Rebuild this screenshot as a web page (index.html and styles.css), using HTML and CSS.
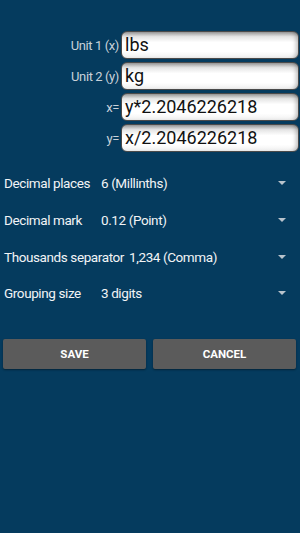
FILE: index.html
```html
<!DOCTYPE html>
<html lang="en">
<head>
    <meta charset="UTF-8">
    <meta name="viewport" content="width=device-width, initial-scale=1.0">
    <title>Edit unit</title>
    <link rel="stylesheet" href="styles.css">
</head>
<body>
    <section class="units">
        <div class="field">
            <label>Unit 1 (x)</label>
            <div class="box">lbs</div>
        </div>
        <div class="field">
            <label>Unit 2 (y)</label>
            <div class="box">kg</div>
        </div>
        <div class="field">
            <label>x=</label>
            <div class="box">y*2.2046226218</div>
        </div>
        <div class="field">
            <label>y=</label>
            <div class="box">x/2.2046226218</div>
        </div>
    </section>

    <section class="options">
        <div class="row">
            <span class="name">Decimal places</span>
            <span class="value">6 (Millinths)</span>
            <span class="arrow"></span>
        </div>
        <div class="row">
            <span class="name">Decimal mark</span>
            <span class="value">0.12 (Point)</span>
            <span class="arrow"></span>
        </div>
        <div class="row">
            <span class="name">Thousands separator</span>
            <span class="value">1,234 (Comma)</span>
            <span class="arrow"></span>
        </div>
        <div class="row">
            <span class="name">Grouping size</span>
            <span class="value">3 digits</span>
            <span class="arrow"></span>
        </div>
    </section>

    <section class="buttons">
        <button>SAVE</button>
        <button>CANCEL</button>
    </section>
</body>
</html>
```

FILE: styles.css
```css
* {
    margin:0;
    padding:0;
    box-sizing:border-box;
}

body {
    width:300px;
    height:533px;
    background:#053b5e;
    font-family:Roboto, "Noto Sans", sans-serif;
    overflow:hidden;
}

.units {
    padding:31px 1px 0 0;
}

.field {
    display:flex;
    align-items:center;
    height:28px;
    margin-bottom:3px;
}

.field label {
    flex:1;
    padding-right:2px;
    text-align:right;
    font-size:13px;
    letter-spacing:-0.4px;
    color:#c9d2da;
}

.box {
    width:178px;
    height:28px;
    padding:0 3px;
    border:1px solid #4a4a4a;
    border-radius:6px;
    background:linear-gradient(to bottom, #9a9a9a 0%, #e4e4e4 18%, #fff 40%, #fff 75%, #f0f0f0 100%);
    box-shadow:inset -4px 0 4px -2px rgba(0,0,0,0.25);
    font-size:18px;
    line-height:26px;
    color:#111;
}

.options {
    padding:10px 0 0;
}

.row {
    display:flex;
    align-items:center;
    height:36.7px;
    padding:0 14px 0 4px;
    font-size:13.5px;
    letter-spacing:-0.4px;
    color:#f2f4f6;
}

.row .name {
    min-width:97px;
    padding-right:5px;
}

.row .value {
    flex:1;
}

.arrow {
    width:0;
    height:0;
    border-left:4px solid transparent;
    border-right:4px solid transparent;
    border-top:4px solid #b9c3cc;
}

.buttons {
    display:flex;
    gap:7px;
    padding:27px 4px 0 3px;
}

.buttons button {
    flex:1;
    height:30px;
    border:none;
    border-radius:2px;
    background:#5b5b5b;
    box-shadow:0 1px 2px rgba(0,0,0,0.4);
    font-family:Roboto, sans-serif;
    font-size:11.5px;
    font-weight:bold;
    color:#fff;
}
```
